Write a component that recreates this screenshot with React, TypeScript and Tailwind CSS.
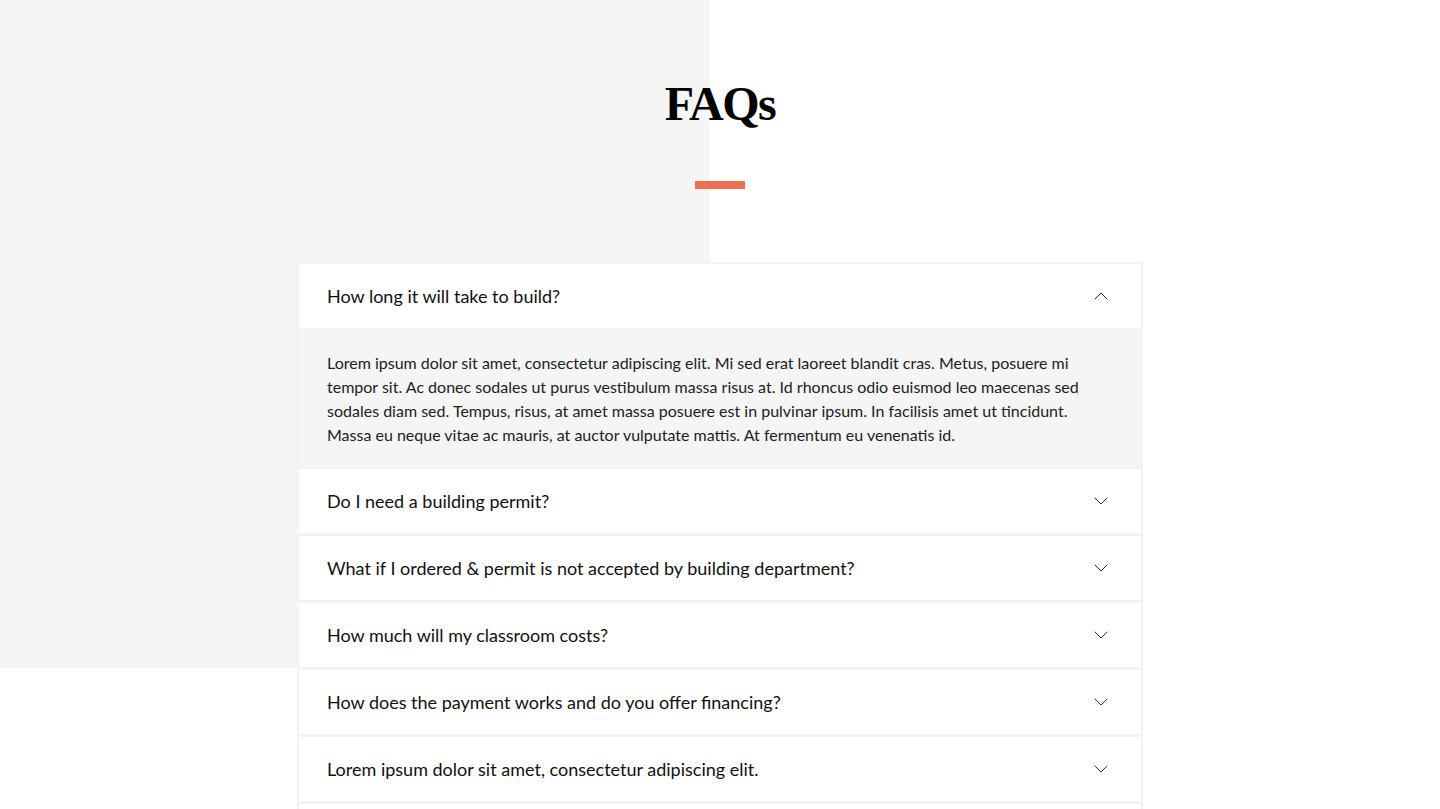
import { ChevronDown, ChevronUp } from 'lucide-react';

const faqs = [
  {
    q: 'How long it will take to build?',
    a: 'Lorem ipsum dolor sit amet, consectetur adipiscing elit. Mi sed erat laoreet blandit cras. Metus, posuere mi tempor sit. Ac donec sodales ut purus vestibulum massa risus at. Id rhoncus odio euismod leo maecenas sed sodales diam sed. Tempus, risus, at amet massa posuere est in pulvinar ipsum. In facilisis amet ut tincidunt. Massa eu neque vitae ac mauris, at auctor vulputate mattis. At fermentum eu venenatis id.',
    open: true,
  },
  { q: 'Do I need a building permit?' },
  { q: 'What if I ordered & permit is not accepted by building department?' },
  { q: 'How much will my classroom costs?' },
  { q: 'How does the payment works and do you offer financing?' },
  { q: 'Lorem ipsum dolor sit amet, consectetur adipiscing elit.' },
  { q: 'Lorem ipsum dolor sit amet, consectetur adipiscing elit.' },
];

export default function App() {
  return (
    <div
      className="min-h-screen bg-white bg-[linear-gradient(90deg,#f5f5f5_0_710px,transparent_710px)] bg-no-repeat bg-[length:100%_668px] pb-20"
      style={{ fontFamily: 'Lato, "Open Sans", sans-serif' }}
    >
      {/* Title */}
      <div className="flex flex-col items-center pt-20">
        <h1
          className="text-[48px] leading-none font-bold tracking-[-0.03em] text-black"
          style={{ fontFamily: '"Liberation Serif", "DejaVu Serif", serif' }}
        >
          FAQs
        </h1>
        <div className="mt-[53px] h-2 w-[50px] bg-[#ed7150]" />
      </div>

      {/* Accordion */}
      <div className="mx-auto mt-[73px] flex w-[846px] flex-col gap-[3px] bg-[#f3f3f3] p-[2px]">
        {faqs.map((f, i) => (
          <div key={i}>
            <button className="flex h-16 w-full items-center justify-between bg-white pl-7 pr-7 text-left">
              <span className="text-[18px] text-[#111]">{f.q}</span>
              {f.open ? (
                <ChevronUp size={24} strokeWidth={1} className="text-[#333]" />
              ) : (
                <ChevronDown size={24} strokeWidth={1} className="text-[#333]" />
              )}
            </button>
            {f.open && (
              <div className="bg-[#f5f5f5] px-7 pt-[23px] pb-[19px] text-[16px] leading-6 text-[#222]">
                {f.a}
              </div>
            )}
          </div>
        ))}
      </div>
    </div>
  );
}
